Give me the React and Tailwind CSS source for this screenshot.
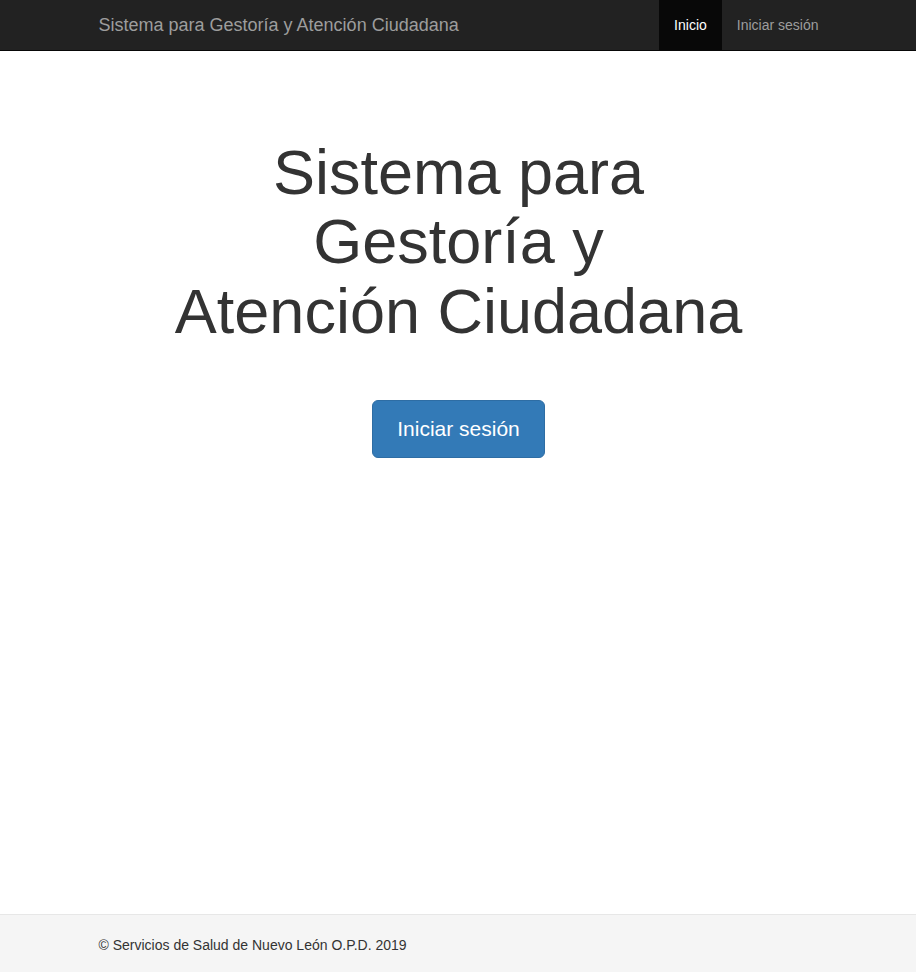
export default function App() {
  return (
    <div className="flex min-h-screen flex-col bg-white pl-px font-['Liberation_Sans',Arial,sans-serif] text-[14px] leading-[20px] text-[#333]">
      {/* navbar-inverse */}
      <nav className="-ml-px h-[51px] border-b border-[#080808] bg-[#222] pl-px">
        <div className="mx-auto flex w-[750px] items-start justify-between px-[15px]">
          <a href="#" className="-ml-[15px] h-[50px] px-[15px] py-[15px] text-[18px] leading-[20px] text-[#9d9d9d]">
            Sistema para Gestoría y Atención Ciudadana
          </a>
          <ul className="-mr-[15px] flex">
            <li>
              <a href="#" className="block bg-[#080808] px-[15px] py-[15px] text-white">
                Inicio
              </a>
            </li>
            <li>
              <a href="#" className="block px-[15px] py-[15px] text-[#9d9d9d]">
                Iniciar sesión
              </a>
            </li>
          </ul>
        </div>
      </nav>

      <main className="flex-1">
        <div className="mx-auto w-[750px] px-[15px]">
          <div className="px-[60px] pt-[87px] text-center">
            <h1 className="text-[63px] font-normal leading-[1.1] text-[#333]">
              Sistema para
              <br />
              Gestoría y
              <br />
              Atención Ciudadana
            </h1>
            <p className="mt-[54px]">
              <a
                href="#"
                className="inline-block rounded-[6px] border border-[#2e6da4] bg-[#337ab7] px-6 py-[14px] text-[21px] leading-[28px] text-white"
              >
                Iniciar sesión
              </a>
            </p>
          </div>
        </div>
      </main>

      <footer className="-ml-px h-[58px] border-t border-[#e7e7e7] bg-[#f5f5f5] pl-px">
        <div className="mx-auto w-[750px] px-[15px] pt-5">
          <p>© Servicios de Salud de Nuevo León O.P.D. 2019</p>
        </div>
      </footer>
    </div>
  )
}
